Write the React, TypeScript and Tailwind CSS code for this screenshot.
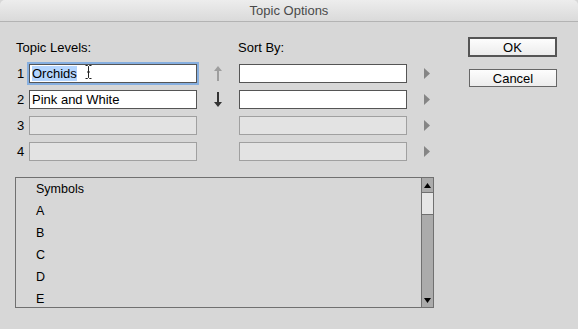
import React from 'react';

const levels = ['Orchids', 'Pink and White', '', ''];
const entries = ['Symbols', 'A', 'B', 'C', 'D', 'E'];

const font = { fontFamily: '"Liberation Sans", Arial, sans-serif' };

const Arrow: React.FC<{ up?: boolean; color: string }> = ({ up, color }) => (
  <svg width="10" height="15" viewBox="0 0 10 15" className={up ? '' : 'rotate-180'}>
    <path d="M5 0 L9 5 L6 5 L6 15 L4 15 L4 5 L1 5 Z" fill={color} />
  </svg>
);

const SideTriangle: React.FC = () => (
  <svg width="6" height="11" viewBox="0 0 6 11">
    <path d="M0 0 L6 5.5 L0 11 Z" fill="#858585" />
  </svg>
);

const App: React.FC = () => {
  return (
    <div className="w-[578px] h-[329px] bg-[#d7d7d7] overflow-hidden text-black" style={font}>
      {/* title bar */}
      <div className="h-[22px] rounded-t-[5px] bg-gradient-to-b from-[#ededed] to-[#dadada] border-b border-[#b3b3b3] flex items-center justify-center text-[13px] text-[#4a4a4a]">
        Topic Options
      </div>

      <div className="flex pl-[15px]">
        {/* left side */}
        <div className="w-[419px] pt-[18px]">
          <div className="flex text-[13px] leading-4">
            <span className="pl-[1px] w-[223px]">Topic Levels:</span>
            <span>Sort By:</span>
          </div>

          <div className="mt-[8px] flex flex-col gap-[7px]">
            {levels.map((text, i) => {
              const enabled = i < 2;
              return (
                <div key={i} className="flex items-center h-[19px] text-[13px]">
                  <span className="w-[14px] pl-[2px]">{i + 1}</span>
                  <div
                    className={`relative w-[168px] h-[19px] flex items-center px-[2px] ${
                      enabled ? 'bg-white border border-[#555]' : 'bg-[#e3e3e3] border border-[#a0a0a0]'
                    } ${i === 0 ? 'border-[#4a7fbf] ring-2 ring-[#86afe0]' : ''}`}
                  >
                    {i === 0 ? (
                      <>
                        <span className="bg-[#b4d5fe] leading-[15px]">{text}</span>
                        <svg width="7" height="14" viewBox="0 0 7 14" className="absolute left-[55px] top-0">
                          <path d="M0.5 0.5 H2.5 L3.5 1.5 L4.5 0.5 H6.5 M3.5 1.5 V12.5 M0.5 13.5 H2.5 L3.5 12.5 L4.5 13.5 H6.5 M2 7 H5" stroke="#222" strokeWidth="1" fill="none" />
                        </svg>
                      </>
                    ) : (
                      <span>{text}</span>
                    )}
                  </div>
                  <div className="w-[42px] flex justify-center">
                    {i === 0 && <Arrow up color="#9e9e9e" />}
                    {i === 1 && <Arrow color="#333" />}
                  </div>
                  <div
                    className={`w-[168px] h-[19px] ${
                      enabled ? 'bg-white border border-[#555]' : 'bg-[#e3e3e3] border border-[#a0a0a0]'
                    }`}
                  />
                  <div className="ml-[17px] flex items-center">
                    <SideTriangle />
                  </div>
                </div>
              );
            })}
          </div>

          {/* list box */}
          <div className="mt-[16px] h-[131px] border border-[#707070] flex">
            <div className="flex-1 pl-[20px] text-[12.5px] leading-[22px]">
              {entries.map((e) => (
                <div key={e}>{e}</div>
              ))}
            </div>
            <div className="w-[12px] border-l border-[#707070] bg-[#ababab] flex flex-col">
              <div className="h-[15px] border-b border-[#707070] flex items-center justify-center">
                <svg width="7" height="5" viewBox="0 0 7 5">
                  <path d="M3.5 0 L7 5 L0 5 Z" fill="#000" />
                </svg>
              </div>
              <div className="h-[22px] bg-[#e6e6e6] border-b border-[#707070]" />
              <div className="flex-1 flex items-end justify-center pb-[4px]">
                <svg width="7" height="5" viewBox="0 0 7 5">
                  <path d="M0 0 L7 0 L3.5 5 Z" fill="#000" />
                </svg>
              </div>
            </div>
          </div>
        </div>

        {/* right side buttons */}
        <div className="ml-[34px] pt-[15px] flex flex-col text-[13px]">
          <button className="w-[89px] h-[20px] border-2 border-[#555] bg-gradient-to-b from-[#fdfdfd] to-[#ececec] flex items-center justify-center leading-none">
            OK
          </button>
          <button className="mt-[12px] ml-[1px] w-[88px] h-[18px] border border-[#666] bg-gradient-to-b from-[#fdfdfd] to-[#ececec] flex items-center justify-center leading-none">
            Cancel
          </button>
        </div>
      </div>
    </div>
  );
};

export default App;
